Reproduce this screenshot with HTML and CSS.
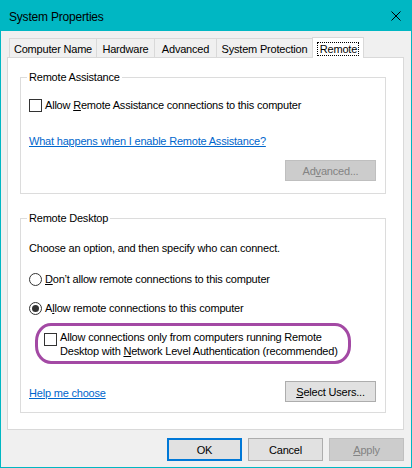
FILE: index.html
```html
<!DOCTYPE html>
<html lang="en">
<head>
    <meta charset="UTF-8">
    <meta name="viewport" content="width=device-width, initial-scale=1.0">
    <title>System Properties</title>
    <link rel="stylesheet" href="styles.css">
</head>
<body>
    <div class="window">
        <div class="titlebar">
            <span class="title">System Properties</span>
            <svg class="close" width="10" height="10" viewBox="0 0 10 10">
                <path d="M0.5 0.5 L9.5 9.5 M9.5 0.5 L0.5 9.5" stroke="#000" stroke-width="1" fill="none"/>
            </svg>
        </div>

        <div class="tabs">
            <div class="tab tab-name">Computer Name</div>
            <div class="tab tab-hardware">Hardware</div>
            <div class="tab tab-advanced">Advanced</div>
            <div class="tab tab-protection">System Protection</div>
            <div class="tab tab-remote active"><span class="focus">Remote</span></div>
        </div>

        <div class="panel">
            <fieldset class="group group-assist">
                <legend>Remote Assistance</legend>
                <div class="option first">
                    <span class="checkbox"></span>
                    <span>Allow <u>R</u>emote Assistance connections to this computer</span>
                </div>
                <a class="link help-assist" href="#">What happens when I enable Remote Assistance?</a>
                <div class="button-row">
                    <button class="btn disabled">Ad<u>v</u>anced...</button>
                </div>
            </fieldset>

            <fieldset class="group group-desktop">
                <legend>Remote Desktop</legend>
                <div class="intro">Choose an option, and then specify who can connect.</div>
                <div class="option radio-first">
                    <span class="radio"></span>
                    <span><u>D</u>on’t allow remote connections to this computer</span>
                </div>
                <div class="option radio-second">
                    <span class="radio checked"></span>
                    <span>A<u>l</u>low remote connections to this computer</span>
                </div>
                <div class="highlight">
                    <div class="option nla">
                        <span class="checkbox"></span>
                        <span>Allow connections only from computers running Remote<br>Desktop with <u>N</u>etwork Level Authentication (recommended)</span>
                    </div>
                </div>
                <div class="bottom-row">
                    <a class="link" href="#">Help me choose</a>
                    <button class="btn"><u>S</u>elect Users...</button>
                </div>
            </fieldset>
        </div>

        <div class="dialog-buttons">
            <button class="btn wide default">OK</button>
            <button class="btn wide">Cancel</button>
            <button class="btn wide disabled"><u>A</u>pply</button>
        </div>
    </div>
</body>
</html>
```
FILE: styles.css
```css
* {
    box-sizing: border-box;
}

body {
    margin: 0;
    padding: 0;
    font-family: "Liberation Sans", Arial, sans-serif;
    font-size: 11px;
    letter-spacing: -0.2px;
    line-height: 14px;
    color: #000;
    background: #f0f0f0;
}

.window {
    width: 412px;
    height: 468px;
    border: 1px solid #00b7c3;
    background: #f0f0f0;
}

.titlebar {
    height: 30px;
    background: #00b7c3;
    display: flex;
    align-items: center;
    justify-content: space-between;
    padding: 0 10px 0 8px;
}

.title {
    font-size: 12px;
    line-height: 30px;
    padding-top: 1px;
}

.close {
    display: block;
    margin-top: -1px;
}

/* tabs */
.tabs {
    display: flex;
    align-items: flex-end;
    margin-top: 6px;
    padding-left: 8px;
}

.tab {
    height: 19px;
    padding-top: 3px;
    border-left: 1px solid #d9d9d9;
    border-top: 1px solid #d9d9d9;
    text-align: center;
    white-space: nowrap;
    background: #f0f0f0;
}

.tab-name { width: 87px; }
.tab-hardware { width: 58px; }
.tab-advanced { width: 62px; }
.tab-protection { width: 96px; }

.tab.active {
    width: 52px;
    height: 21px;
    padding-top: 4px;
    margin-bottom: -1px;
    border-right: 1px solid #d9d9d9;
    background: #fff;
    position: relative;
    z-index: 1;
}

.focus {
    display: inline-block;
    border: 1px dotted #000;
    line-height: 12px;
    padding: 0 1px 0 2px;
}

/* tab page */
.panel {
    margin-left: 6px;
    width: 397px;
    height: 373px;
    border: 1px solid #d9d9d9;
    background: #fff;
    padding: 0 0 0 12px;
}

.group {
    width: 366px;
    margin: 0;
    padding: 0 9px 12px 8px;
    border: 1px solid #dcdcdc;
    min-inline-size: 0;
}

.group legend {
    padding: 0 2px;
    margin-left: -2px;
    line-height: 14px;
}

.group-assist {
    margin-top: 12px;
}

.group-desktop {
    margin-top: 17px;
    padding-bottom: 10px;
}

.option {
    display: flex;
    align-items: center;
    gap: 3px;
    white-space: nowrap;
}

.option.first {
    margin-top: 14px;
}

.checkbox {
    width: 13px;
    height: 13px;
    border: 1px solid #333;
    background: #fff;
    flex: none;
}

.radio {
    width: 13px;
    height: 13px;
    border: 1px solid #333;
    border-radius: 50%;
    background: #fff;
    flex: none;
    display: flex;
    align-items: center;
    justify-content: center;
}

.radio.checked::after {
    content: "";
    width: 7px;
    height: 7px;
    border-radius: 50%;
    background: #333;
}

.link {
    color: #0066cc;
    text-decoration: underline;
    display: inline-block;
}

.help-assist {
    margin-top: 22px;
}

.button-row {
    display: flex;
    justify-content: flex-end;
    margin-top: 12px;
}

.btn {
    font-family: inherit;
    font-size: 11px;
    letter-spacing: -0.2px;
    color: #000;
    width: 91px;
    height: 21px;
    padding: 0;
    border: 1px solid #adadad;
    background: #e1e1e1;
}

.btn.disabled {
    background: #cccccc;
    border-color: #bfbfbf;
    color: #838383;
}

.intro {
    margin-top: 16px;
}

.radio-first {
    margin-top: 17px;
}

.radio-second {
    margin-top: 15px;
}

.highlight {
    margin: 8px 0 0 6px;
    width: 316px;
    height: 41px;
    border: 3px solid #a349a4;
    border-radius: 16px / 18px;
    padding: 4px 0 0 6px;
}

.nla {
    align-items: flex-start;
}

.nla .checkbox {
    margin-top: 3px;
}

.bottom-row {
    display: flex;
    justify-content: space-between;
    align-items: center;
    margin-top: 17px;
}

.bottom-row .link {
    margin-top: 2px;
}

/* dialog buttons */
.dialog-buttons {
    display: flex;
    justify-content: flex-end;
    gap: 6px;
    margin-top: 8px;
    padding-right: 7px;
}

.btn.wide {
    width: 75px;
    height: 23px;
}

.btn.default {
    border: 2px solid #0078d7;
}
```
